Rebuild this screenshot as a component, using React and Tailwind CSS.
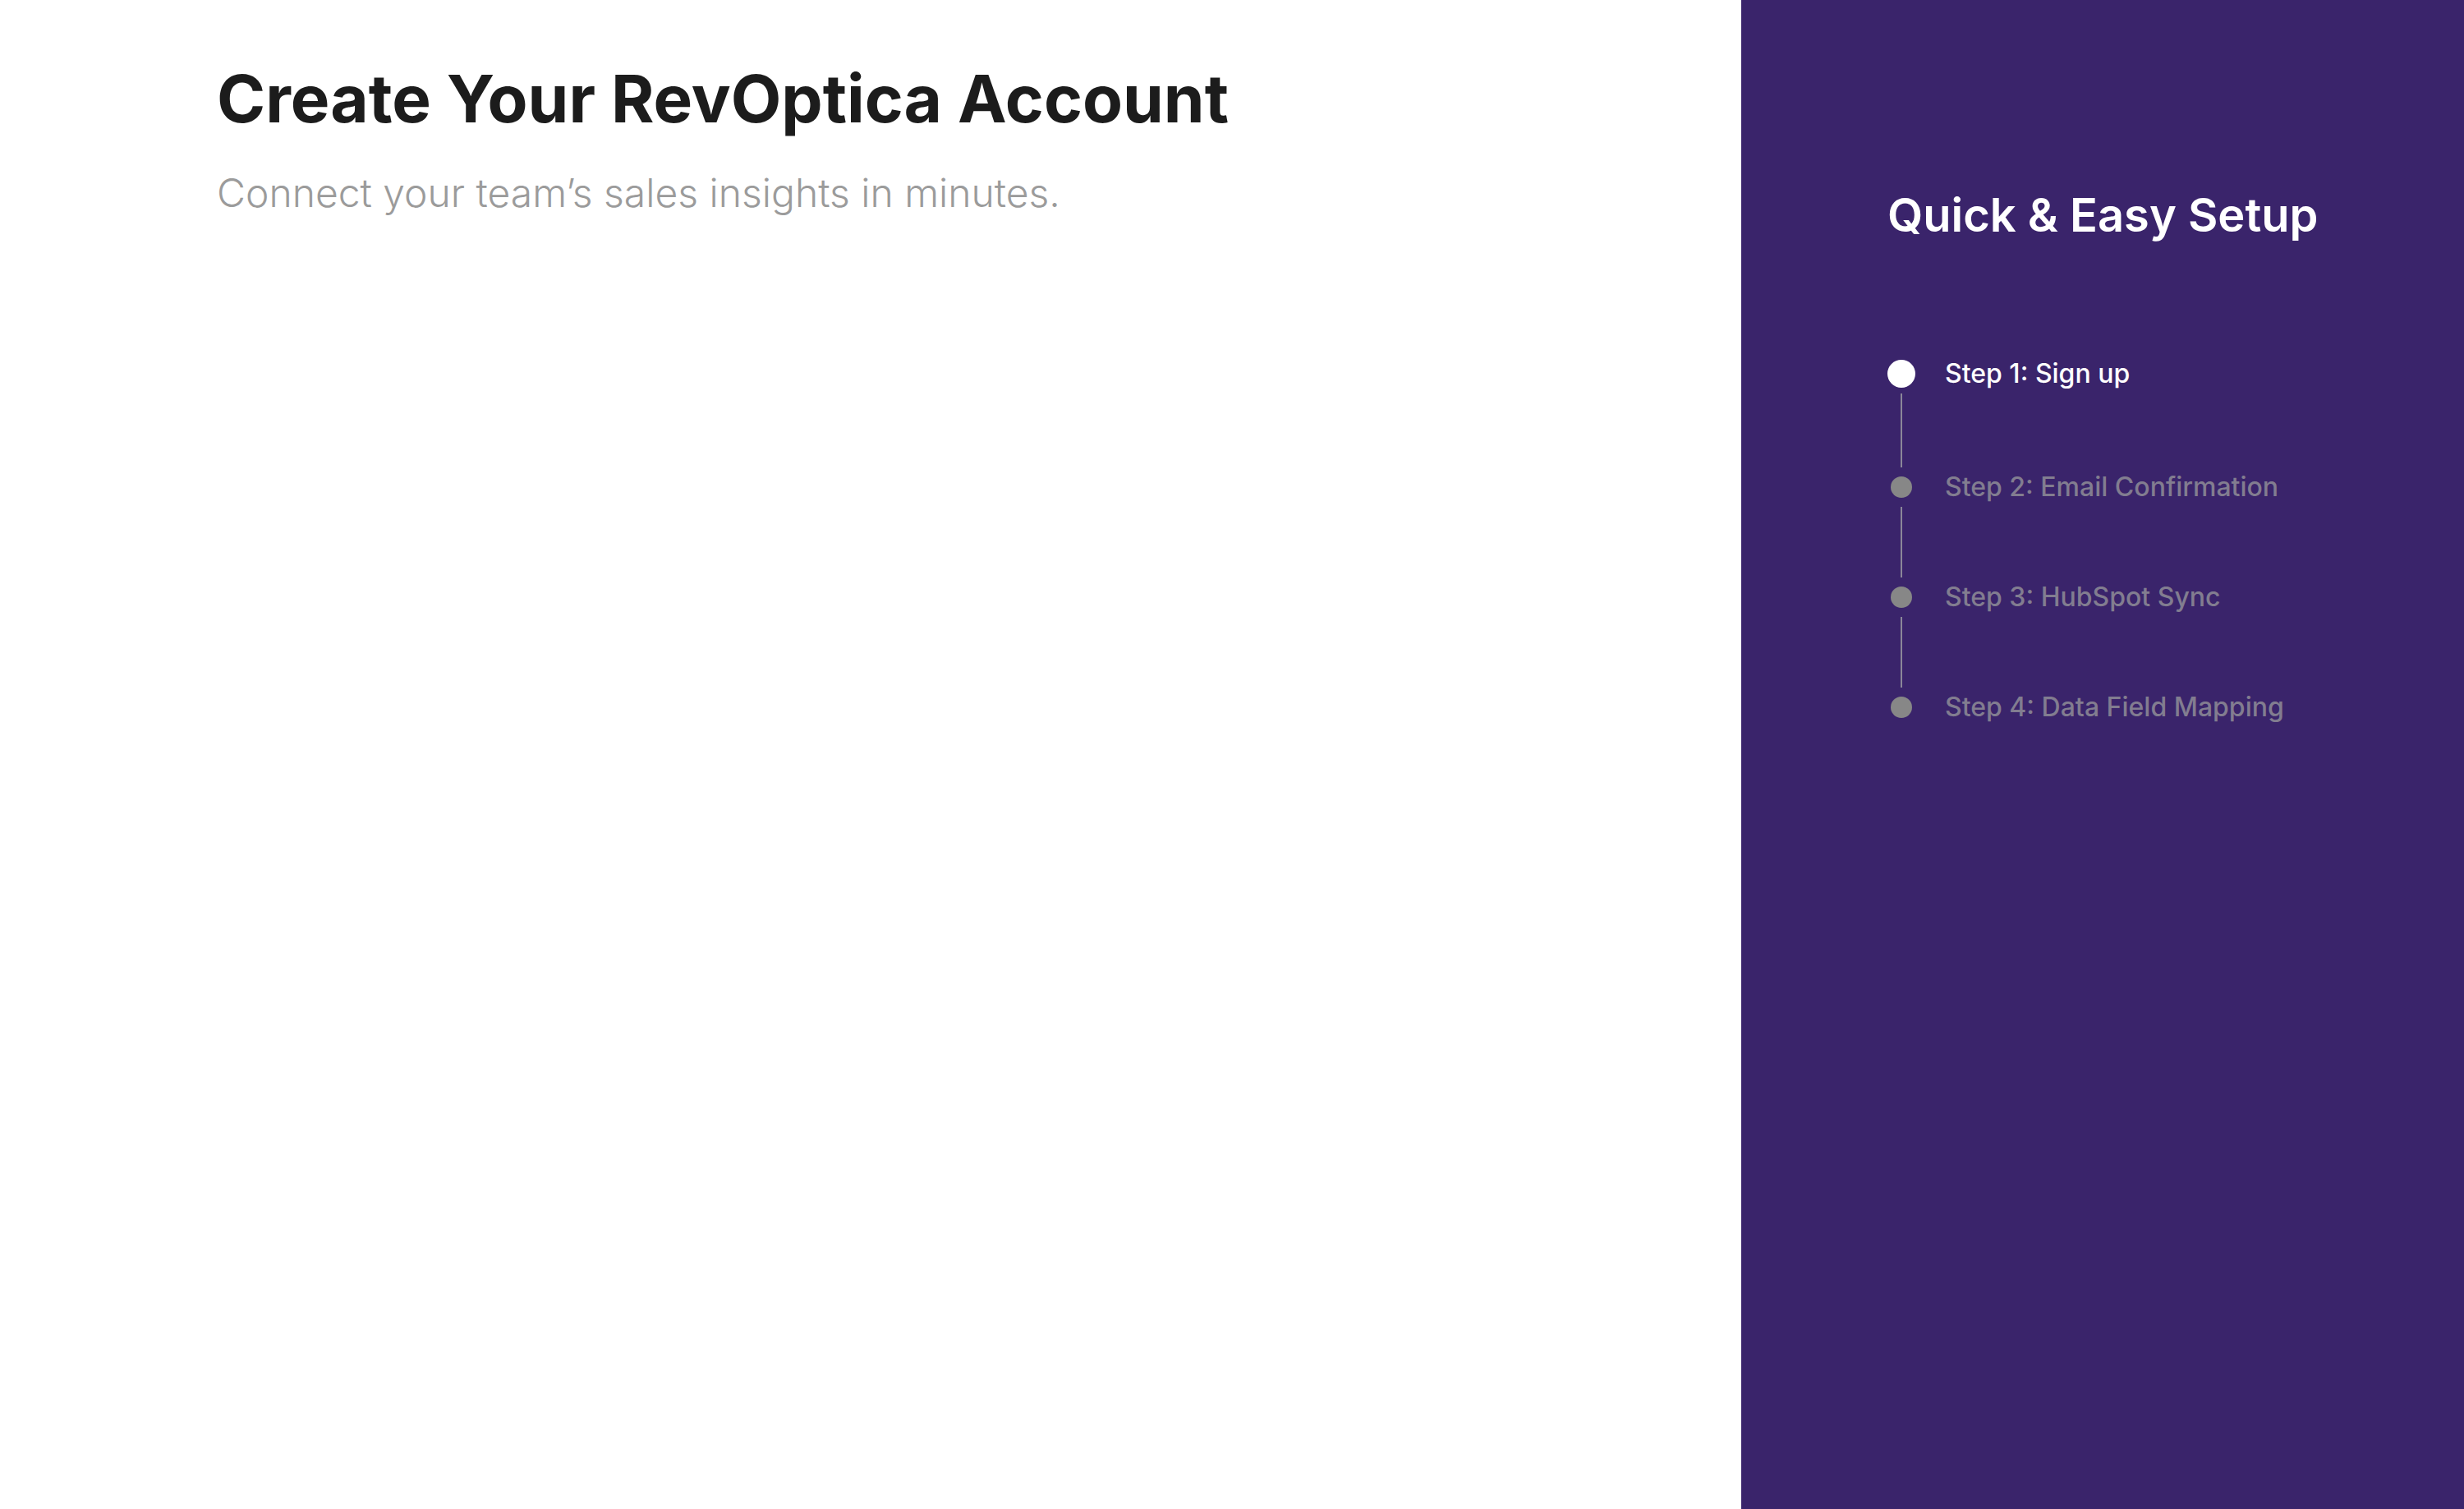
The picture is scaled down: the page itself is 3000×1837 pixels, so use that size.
import React from 'react'

const steps = [
  { label: 'Step 1: Sign up', active: true },
  { label: 'Step 2: Email Confirmation', active: false },
  { label: 'Step 3: HubSpot Sync', active: false },
  { label: 'Step 4: Data Field Mapping', active: false },
]

export default function App(){
  return (
    <div className="flex min-h-[1837px] w-full font-['Inter',sans-serif]">
      <main className="flex-1 bg-white pl-[264px] pt-[72px]">
        <h1 className="text-[80px] leading-[1.2] font-bold text-[#1c1c1c]">Create Your RevOptica Account</h1>
        <p className="mt-[38px] text-[48px] leading-[1.2] font-light text-[#9b9b9b]">Connect your team’s sales insights in minutes.</p>
      </main>

      <aside className="w-[880px] shrink-0 bg-[#3a246b] pl-[178px] pt-[229px]">
        <h2 className="text-[56px] leading-[1.2] font-semibold text-white">Quick &amp; Easy Setup</h2>

        <div className="mt-[142px] flex flex-col">
          {steps.map((s, i) => (
            <div key={s.label} className="flex">
              <div className="w-[34px] flex flex-col items-center">
                <div className="h-[34px] flex items-center justify-center">
                  {s.active
                    ? <div className="w-[34px] h-[34px] rounded-full bg-white" />
                    : <div className="w-[26px] h-[26px] rounded-full bg-[#878787]" />}
                </div>
                {i < steps.length - 1 && (
                  <div className={`w-[2px] my-[7px] bg-[#8b8799] ${i === 0 ? 'h-[90px]' : 'h-[86px]'}`} />
                )}
              </div>
              <div className={`ml-[36px] h-[34px] flex items-center text-[32px] font-medium ${s.active ? 'text-white' : 'text-[#827d90]'}`}>
                {s.label}
              </div>
            </div>
          ))}
        </div>
      </aside>
    </div>
  )
}
